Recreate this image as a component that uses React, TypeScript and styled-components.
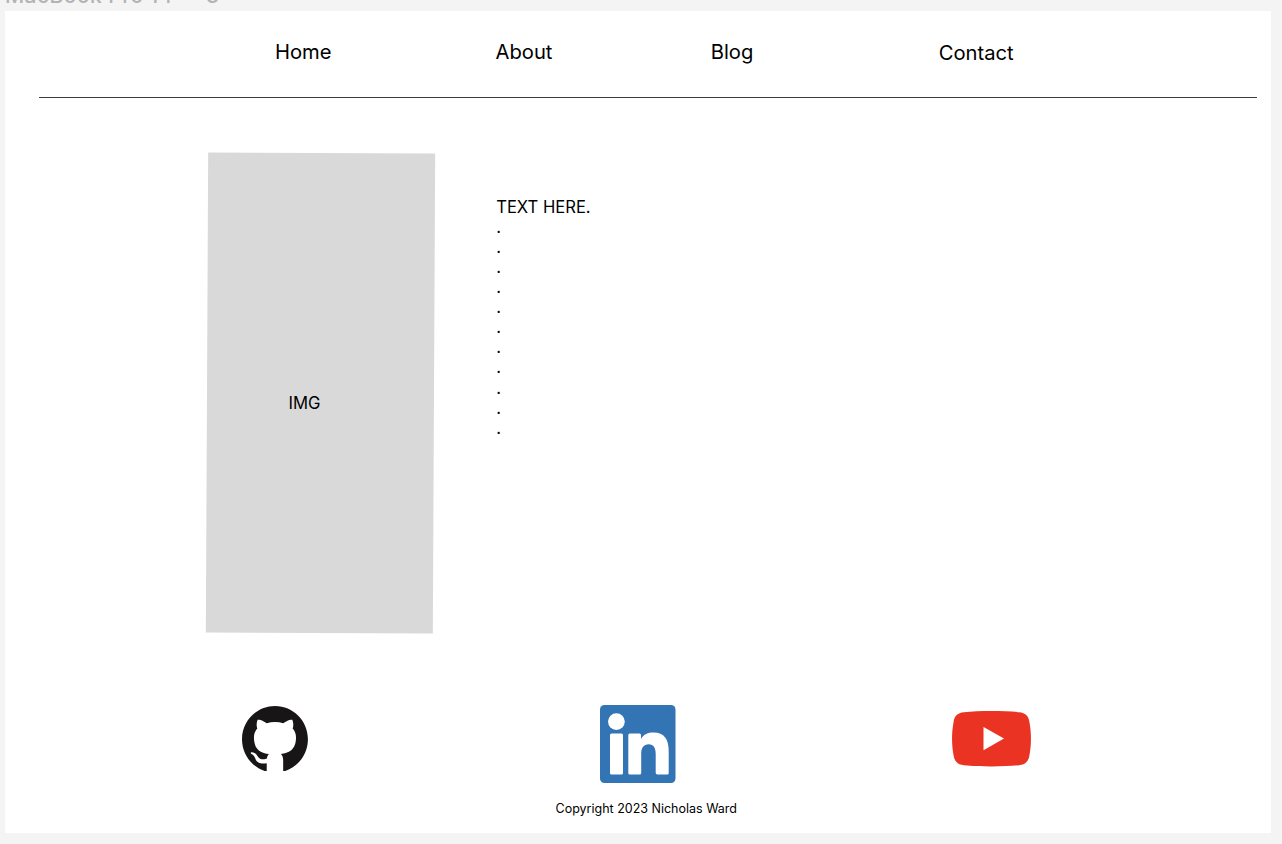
import React from "react";
import styled, { createGlobalStyle } from "styled-components";

const GlobalStyle = createGlobalStyle`
  *, *::before, *::after { box-sizing: border-box; }
  body {
    margin: 0;
    background: #f4f4f4;
    font-family: Inter, "Liberation Sans", sans-serif;
    color: #000;
  }
`;

const Canvas = styled.div`
  width: 1282px;
  height: 844px;
  padding-left: 5px;
  overflow: hidden;
`;

const FrameLabel = styled.div`
  display: flex;
  align-items: flex-end;
  height: 11px;
  line-height: 24px;
  padding-bottom: 3px;
  font-size: 21px;
  font-weight: 500;
  letter-spacing: 0.45px;
  color: #b3b3b3;
  white-space: pre;
`;

const Frame = styled.main`
  display: flex;
  flex-direction: column;
  width: 1266px;
  height: 822px;
  background: #fff;
`;

const Nav = styled.nav`
  display: grid;
  grid-template-columns: 220.5px 215.2px 228px auto;
  align-items: start;
  height: 87px;
  margin: 0 14px 0 34px;
  padding: 29px 0 0 236px;
  border-bottom: 1px solid #3c3c3c;
`;

const NavLink = styled.a<{ $drop?: number }>`
  padding-top: ${(p) => p.$drop ?? 0}px;
  font-size: 20.2px;
  line-height: 24px;
`;

const Content = styled.section`
  display: flex;
  height: 480px;
  margin: 54.7px 0 0 202px;
`;

const ImagePlaceholder = styled.div`
  width: 227px;
  height: 480px;
  background: #d9d9d9;
  transform: rotate(0.28deg);
`;

const ImageLabel = styled.span`
  display: block;
  padding: 240.3px 0 0 81px;
  font-size: 16.7px;
  line-height: 20px;
  transform: rotate(-0.28deg);
`;

const Copy = styled.div`
  padding: 44px 0 0 62.2px;
  font-size: 16.6px;
  line-height: 20.1px;
`;

const Line = styled.p`
  margin: 0;
`;

const Socials = styled.div`
  display: grid;
  grid-template-columns: 358px 352px auto;
  align-items: start;
  height: 107px;
  margin: 61px 0 0 237px;
`;

const Social = styled.a<{ $top: number }>`
  display: block;
  padding-top: ${(p) => p.$top}px;

  svg { display: block; }
`;

const Footer = styled.footer`
  padding-left: 550.5px;
  font-size: 12.5px;
  line-height: 16px;
`;

const GithubLogo = () => (
  <svg width="66" height="65" viewBox="0 0 97.7 96" preserveAspectRatio="none">
    <path
      fill="#171516"
      d="M48.854 0C21.839 0 0 22 0 49.217c0 21.756 13.993 40.172 33.405 46.69L36.6 96V84.418c-13.59 2.934-16.42-5.867-16.42-5.867-2.184-5.704-5.42-7.17-5.42-7.17-4.448-3.015.324-3.015.324-3.015 4.934.326 7.523 5.052 7.523 5.052 4.367 7.496 11.404 5.378 14.235 4.074.404-3.178 1.699-5.378 3.074-6.6-10.839-1.141-22.243-5.378-22.243-24.283 0-5.378 1.94-9.778 5.014-13.2-.485-1.222-2.184-6.275.486-13.038 0 0 4.125-1.304 13.426 5.052a46.97 46.97 0 0 1 12.214-1.63c4.125 0 8.33.571 12.213 1.63 9.302-6.356 13.427-5.052 13.427-5.052 2.67 6.763.97 11.816.485 13.038 3.155 3.422 5.015 7.822 5.015 13.2 0 18.905-11.404 23.06-22.324 24.283 1.78 1.548 3.316 4.481 3.316 9.126V96l3.236-.093c19.412-6.52 33.405-24.935 33.405-46.691C97.707 22 75.788 0 48.854 0z"
    />
  </svg>
);

const LinkedinLogo = () => (
  <svg width="75.5" height="78.5" viewBox="0 0 75.5 78.5">
    <rect width="75.5" height="78" rx="4.5" fill="#3375b4" />
    <g fill="#fff">
      <circle cx="16.4" cy="16.6" r="8.4" />
      <rect x="10" y="28.4" width="13" height="41" rx="1.5" />
      <path
        transform="translate(0 -0.3)"
        d="M29.8 28.7H39.5Q41 28.7 41 30.2V34.2C43.7 29.5 48 27.8 53.4 27.8C64.5 27.8 68.7 35 68.7 46V68.2Q68.7 69.7 67.2 69.7H57.4Q55.7 69.7 55.7 68V49.5C55.7 43 53.6 39.5 48.7 39.5C43.7 39.5 41.2 43 41.2 49V68.2Q41.2 69.7 39.7 69.7H29.8Q28.3 69.7 28.3 68.2V30.2Q28.3 28.7 29.8 28.7Z"
      />
    </g>
  </svg>
);

const YoutubeLogo = () => (
  <svg width="79" height="56" viewBox="0 0 79 56">
    <path
      fill="#ea3323"
      d="M12 1.2C27 -.4 52 -.4 67 1.2C73.5 1.8 76.5 5.1 77.3 10.3C79.5 22 79.5 33.6 77.3 45.1C76.5 50.3 73.5 53.6 67 54.2C52 55.8 27 55.8 12 54.2C5.5 53.6 2.5 50.3 1.7 45.1C-.5 33.6 -.5 22 1.7 10.3C2.5 5.1 5.5 1.8 12 1.2Z"
    />
    <path fill="#fff" d="M31.5 15.9L52 27.6L31.5 39.3Z" />
  </svg>
);

const bodyLines = ["TEXT HERE.", ...Array<string>(11).fill(".")];

export default function App() {
  return (
    <>
      <GlobalStyle />
      <Canvas>
        <FrameLabel>MacBook Pro 14" - 3</FrameLabel>
        <Frame>
          <Nav>
            <NavLink>Home</NavLink>
            <NavLink>About</NavLink>
            <NavLink>Blog</NavLink>
            <NavLink $drop={1}>Contact</NavLink>
          </Nav>
          <Content>
            <ImagePlaceholder>
              <ImageLabel>IMG</ImageLabel>
            </ImagePlaceholder>
            <Copy>
              {bodyLines.map((line, i) => (
                <Line key={i}>{line}</Line>
              ))}
            </Copy>
          </Content>
          <Socials>
            <Social $top={12.3} aria-label="GitHub">
              <GithubLogo />
            </Social>
            <Social $top={11} aria-label="LinkedIn">
              <LinkedinLogo />
            </Social>
            <Social $top={17} aria-label="YouTube">
              <YoutubeLogo />
            </Social>
          </Socials>
          <Footer>Copyright 2023 Nicholas Ward</Footer>
        </Frame>
      </Canvas>
    </>
  );
}
